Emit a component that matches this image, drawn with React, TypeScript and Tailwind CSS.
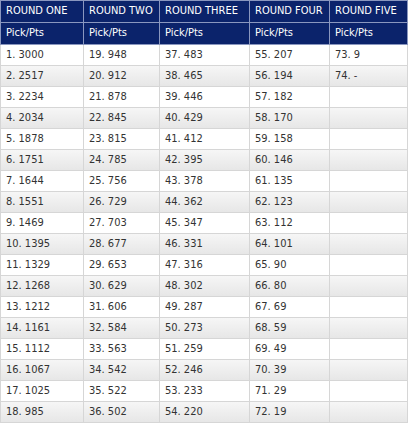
import React from 'react';

const rounds = ['ROUND ONE', 'ROUND TWO', 'ROUND THREE', 'ROUND FOUR', 'ROUND FIVE'];
const widths = ['w-[83px]', 'w-[76px]', 'w-[90px]', 'w-[80px]', 'w-[78px]'];

const points: string[][] = [
  ['3000', '2517', '2234', '2034', '1878', '1751', '1644', '1551', '1469', '1395', '1329', '1268', '1212', '1161', '1112', '1067', '1025', '985'],
  ['948', '912', '878', '845', '815', '785', '756', '729', '703', '677', '653', '629', '606', '584', '563', '542', '522', '502'],
  ['483', '465', '446', '429', '412', '395', '378', '362', '347', '331', '316', '302', '287', '273', '259', '246', '233', '220'],
  ['207', '194', '182', '170', '158', '146', '135', '123', '112', '101', '90', '80', '69', '59', '49', '39', '29', '19'],
  ['9', '-'],
];

const App: React.FC = () => {
  return (
    <div className="w-[411px] h-[424px] bg-white font-['DejaVu_Sans_Condensed','Liberation_Sans',sans-serif] text-[11px]">
      <table className="border-collapse table-fixed w-[408px]">
        <thead>
          <tr className="h-[22px] bg-[#0b236b] text-white">
            {rounds.map((r, i) => (
              <th key={r} className={`${widths[i]} border border-[#8a97bf] pl-[5px] pr-0 text-left font-normal whitespace-nowrap overflow-hidden`}>
                {r}
              </th>
            ))}
          </tr>
          <tr className="h-[22px] bg-[#0b236b] text-white">
            {rounds.map((r) => (
              <th key={r} className="border border-[#8a97bf] pl-[5px] pr-0 text-left font-normal whitespace-nowrap">
                Pick/Pts
              </th>
            ))}
          </tr>
        </thead>
        <tbody>
          {Array.from({ length: 18 }).map((_, row) => (
            <tr
              key={row}
              className={`h-[21px] text-[#333] ${row % 2 === 0 ? 'bg-white' : 'bg-gradient-to-b from-[#f6f6f6] to-[#e6e6e6]'}`}
            >
              {points.map((col, c) => {
                const val = col[row];
                const pick = c * 18 + row + 1;
                return (
                  <td key={c} className="border border-[#d6d6d6] pl-[5px] pr-0 whitespace-nowrap">
                    {val !== undefined ? `${pick}. ${val}` : ''}
                  </td>
                );
              })}
            </tr>
          ))}
        </tbody>
      </table>
    </div>
  );
};

export default App;
